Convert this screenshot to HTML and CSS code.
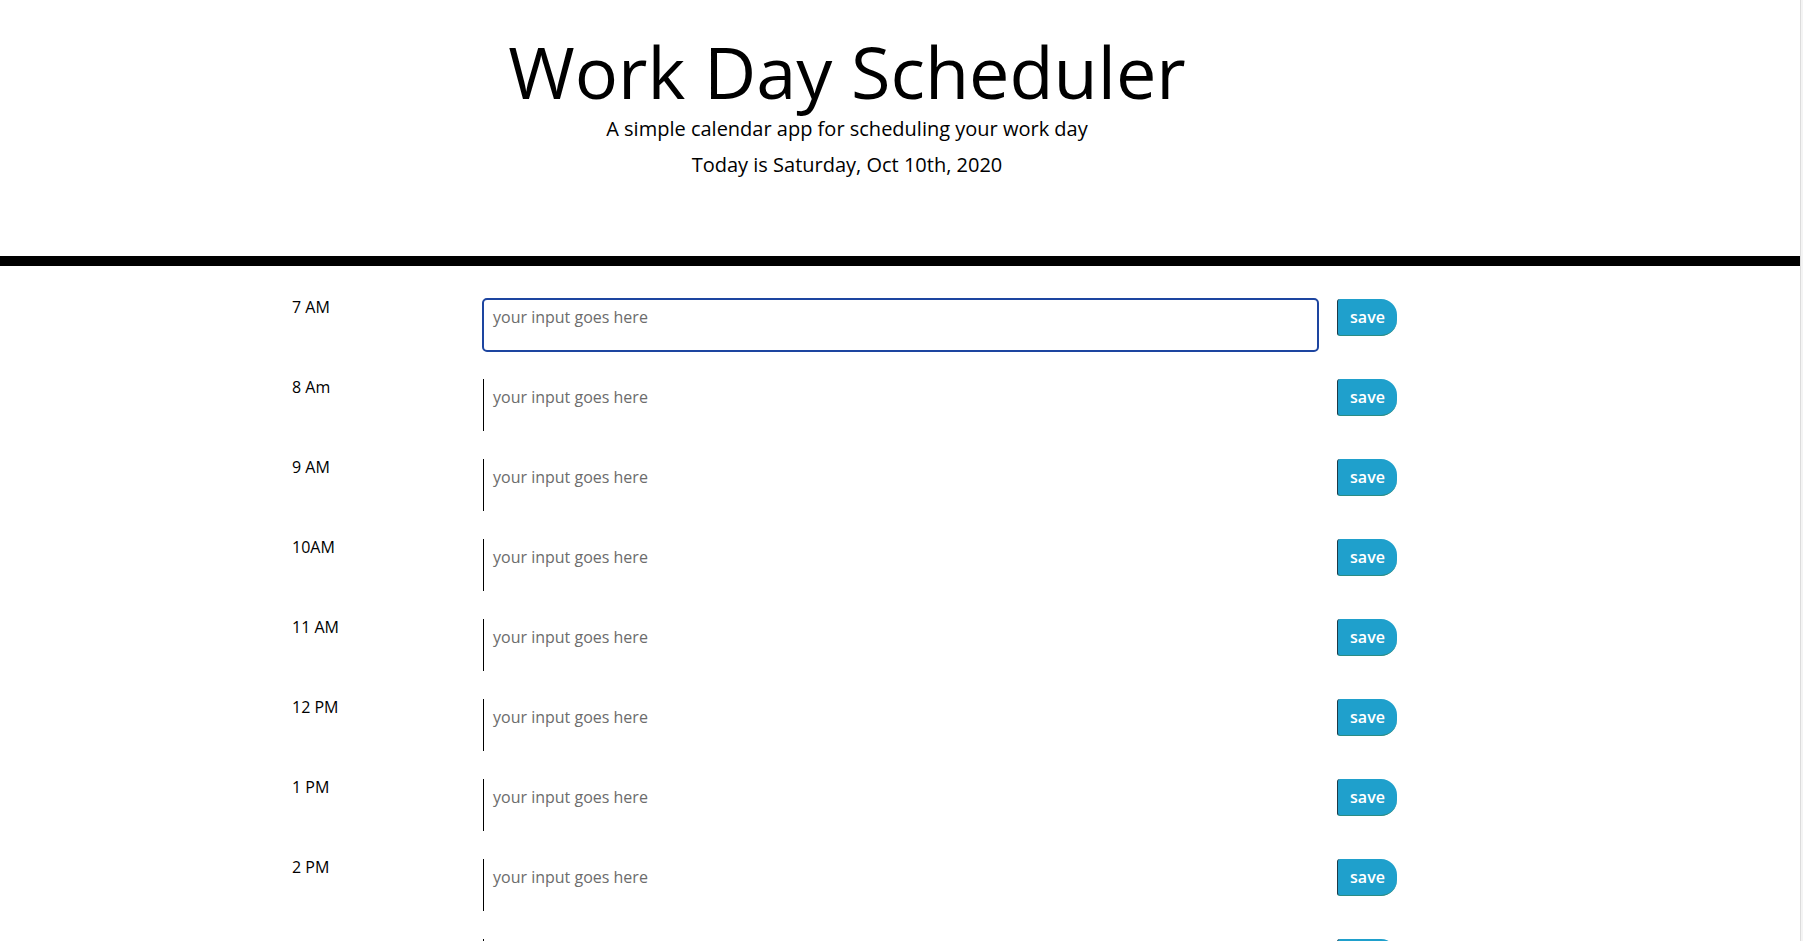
FILE: index.html
```html
<!DOCTYPE html>
<html lang="en">
<head>
<meta charset="utf-8">
<title>Work Day Scheduler</title>
<link rel="stylesheet" href="styles.css">
</head>
<body>
<div class="page">
  <header class="jumbotron">
    <h1 class="display">Work Day Scheduler</h1>
    <p class="lead">A simple calendar app for scheduling your work day</p>
    <p class="lead today">Today is Saturday, Oct 10th, 2020</p>
  </header>
  <main class="schedule">
    <div class="time-block">
      <div class="hour">7 AM</div>
      <textarea class="description focused" placeholder="your input goes here"></textarea>
      <button class="saveBtn">save</button>
    </div>
    <div class="time-block">
      <div class="hour">8 Am</div>
      <textarea class="description" placeholder="your input goes here"></textarea>
      <button class="saveBtn">save</button>
    </div>
    <div class="time-block">
      <div class="hour">9 AM</div>
      <textarea class="description" placeholder="your input goes here"></textarea>
      <button class="saveBtn">save</button>
    </div>
    <div class="time-block">
      <div class="hour">10AM</div>
      <textarea class="description" placeholder="your input goes here"></textarea>
      <button class="saveBtn">save</button>
    </div>
    <div class="time-block">
      <div class="hour">11 AM</div>
      <textarea class="description" placeholder="your input goes here"></textarea>
      <button class="saveBtn">save</button>
    </div>
    <div class="time-block">
      <div class="hour">12 PM</div>
      <textarea class="description" placeholder="your input goes here"></textarea>
      <button class="saveBtn">save</button>
    </div>
    <div class="time-block">
      <div class="hour">1 PM</div>
      <textarea class="description" placeholder="your input goes here"></textarea>
      <button class="saveBtn">save</button>
    </div>
    <div class="time-block">
      <div class="hour">2 PM</div>
      <textarea class="description" placeholder="your input goes here"></textarea>
      <button class="saveBtn">save</button>
    </div>
    <div class="time-block">
      <div class="hour">3 PM</div>
      <textarea class="description" placeholder="your input goes here"></textarea>
      <button class="saveBtn">save</button>
    </div>
    <div class="time-block">
      <div class="hour">4 PM</div>
      <textarea class="description" placeholder="your input goes here"></textarea>
      <button class="saveBtn">save</button>
    </div>
  </main>
</div>
</body>
</html>
```
FILE: styles.css
```css
html {
  overflow: hidden;
}

body {
  margin: 0;
  font-family: "Open Sans", "Noto Sans", sans-serif;
  color: #000;
  background: linear-gradient(to right, #fff 1800px, #dcdcdc 1800px, #dcdcdc 1801px, #f4f4f4 1801px);
  min-height: 941px;
}

.page {
  width: 1800px;
  background: #fff;
}

.jumbotron {
  box-sizing: border-box;
  height: 266px;
  padding: 28px 106px 0 0;
  text-align: center;
  border-bottom: 10px solid #000;
}

.display {
  margin: 0;
  font-size: 72px;
  font-weight: 400;
  line-height: 86.4px;
}

.lead {
  margin: 0;
  font-size: 20px;
  line-height: 30px;
}

.today {
  margin-top: 6px;
}

.schedule {
  padding: 33px 0 0 292px;
}

.time-block {
  display: flex;
  align-items: flex-start;
  height: 52px;
  margin-bottom: 28px;
}

.hour {
  width: 191px;
  font-size: 16px;
  line-height: 16px;
  padding-top: 0;
}

.description {
  box-sizing: border-box;
  width: 835px;
  height: 52px;
  margin: 0;
  padding: 7px 9px 6px;
  border: none;
  border-left: 1px solid #000;
  border-radius: 0;
  resize: none;
  font-family: "Open Sans", "Noto Sans", sans-serif;
  font-size: 16px;
  background: #fff;
}

.description::placeholder {
  color: #6c6c6c;
}

.description.focused {
  outline: 2px solid #1d45a0;
  outline-offset: -1px;
  border-radius: 4px;
  border-left-color: transparent;
}

.saveBtn {
  box-sizing: border-box;
  width: 60px;
  height: 37px;
  margin-left: 19px;
  padding: 0;
  border: none;
  border-left: 1px solid #1e3a48;
  border-bottom: 1px solid #2b8c84;
  border-radius: 3px 16px 16px 3px;
  background: #1fa0cc;
  color: #fff;
  font-family: "Open Sans", "Noto Sans", sans-serif;
  font-size: 16px;
  font-weight: 600;
}
```
